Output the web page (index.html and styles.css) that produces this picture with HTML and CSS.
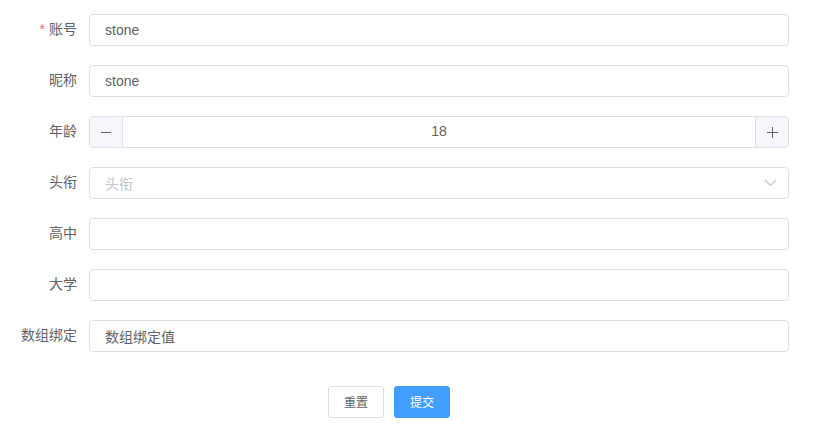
FILE: index.html
```html
<!DOCTYPE html>
<html lang="zh">
<head>
<meta charset="utf-8">
<link rel="stylesheet" href="styles.css">
</head>
<body>
<form class="form">
  <div class="item">
    <label class="label"><span class="req">*</span>账号</label>
    <div class="content"><div class="input">stone</div></div>
  </div>
  <div class="item">
    <label class="label">昵称</label>
    <div class="content"><div class="input">stone</div></div>
  </div>
  <div class="item">
    <label class="label">年龄</label>
    <div class="content">
      <div class="number">
        <span class="num-btn minus"><svg width="10" height="10" viewBox="0 0 10 10"><path d="M0 5.5h10" stroke="#606266" stroke-width="1"/></svg></span>
        <span class="num-val">18</span>
        <span class="num-btn plus"><svg width="11" height="11" viewBox="0 0 11 11"><path d="M0 5.5h11M5.5 0v11" stroke="#606266" stroke-width="1"/></svg></span>
      </div>
    </div>
  </div>
  <div class="item">
    <label class="label">头衔</label>
    <div class="content">
      <div class="input select"><span class="placeholder">头衔</span>
        <svg class="arrow" width="13" height="8" viewBox="0 0 13 8"><path d="M1 1l5.5 5.5L12 1" fill="none" stroke="#C0C4CC" stroke-width="1.1"/></svg>
      </div>
    </div>
  </div>
  <div class="item">
    <label class="label">高中</label>
    <div class="content"><div class="input"></div></div>
  </div>
  <div class="item">
    <label class="label">大学</label>
    <div class="content"><div class="input"></div></div>
  </div>
  <div class="item">
    <label class="label">数组绑定</label>
    <div class="content"><div class="input">数组绑定值</div></div>
  </div>
  <div class="actions">
    <button type="button" class="btn">重置</button>
    <button type="button" class="btn primary">提交</button>
  </div>
</form>
</body>
</html>
```
FILE: styles.css
```css
* { box-sizing: border-box; }
body {
  margin: 0;
  padding: 14px 0 0 8px;
  background: #fff;
  font-family: "Liberation Sans", "Noto Sans CJK SC", sans-serif;
  font-size: 14px;
  color: #606266;
}
.form { width: 781px; }
.item {
  display: flex;
  align-items: center;
  margin-bottom: 19px;
}
.label {
  width: 81px;
  padding-right: 12px;
  padding-bottom: 2px;
  text-align: right;
  color: #606266;
  line-height: 30px;
}
.req { color: #F56C6C; margin-right: 4px; }
.content { width: 700px; }
.input {
  height: 32px;
  border: 1px solid #DCDFE6;
  border-radius: 4px;
  padding: 0 15px 1px;
  color: #606266;
  display: flex;
  align-items: center;
}
.select { justify-content: space-between; padding-right: 11px; }
.placeholder { color: #C0C4CC; }
.number {
  height: 32px;
  border: 1px solid #DCDFE6;
  border-radius: 4px;
  display: flex;
  overflow: hidden;
}
.num-btn {
  width: 33px;
  background: #F5F7FA;
  display: flex;
  align-items: center;
  justify-content: center;
}
.minus { border-right: 1px solid #DCDFE6; }
.plus { border-left: 1px solid #DCDFE6; }
.num-val {
  flex: 1;
  text-align: center;
  line-height: 29px;
  color: #606266;
}
.actions {
  display: flex;
  gap: 10px;
  padding-left: 320px;
  padding-top: 15px;
}
.btn {
  width: 56px;
  height: 32px;
  border: 1px solid #DCDFE6;
  border-radius: 3px;
  background: #fff;
  color: #606266;
  font-family: inherit;
  font-size: 12px;
  padding: 0 0 1px;
}
.btn.primary {
  background: #409EFF;
  border-color: #409EFF;
  color: #fff;
}
```
